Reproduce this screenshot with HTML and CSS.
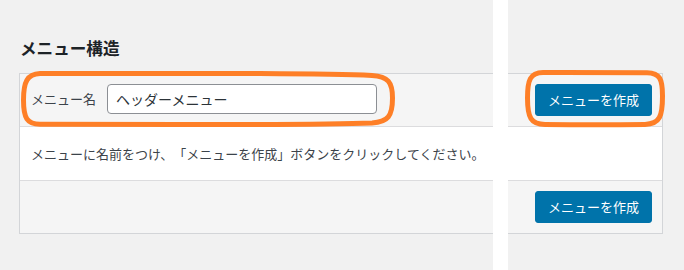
FILE: index.html
```html
<!DOCTYPE html>
<html lang="ja">
<head>
<meta charset="utf-8">
<title>メニュー構造</title>
<link rel="stylesheet" href="styles.css">
</head>
<body>
<div class="page">
  <h2 class="title">メニュー構造</h2>
  <div class="panel">
    <div class="panel-head">
      <label class="name-label" for="menu-name">メニュー名</label>
      <input class="name-input" id="menu-name" type="text" value="ヘッダーメニュー">
      <span class="spacer"></span>
      <button class="btn-primary" type="button">メニューを作成</button>
    </div>
    <div class="panel-body">
      <p class="hint">メニューに名前をつけ、「メニューを作成」ボタンをクリックしてください。</p>
    </div>
    <div class="panel-foot">
      <button class="btn-primary" type="button">メニューを作成</button>
    </div>
  </div>
  <div class="cut"></div>
  <svg class="marks" width="684" height="270" viewBox="0 0 684 270" aria-hidden="true">
    <path d="M40 73.5 C120 73 200 73.2 260 73.6 C320 74 350 74.5 372 75.5 C388 76.5 392.5 82 392.5 98 C392.5 116 388 122 372 123 C330 124.6 250 124.6 180 124.5 C120 124.4 70 124.5 40 124.2 C27 124 23.5 118 23.5 100 C23.5 82 27 74 40 73.5 Z"/>
    <path d="M543 72.5 C580 72.3 620 72.4 647 72.8 C660 73.2 662.5 79 662.5 96 C662.5 116 660 124 645 124.4 C610 124.8 575 124.7 545 124.5 C531 124.3 527.5 118 527.5 98 C527.5 80 530 72.8 543 72.5 Z"/>
  </svg>
</div>
</body>
</html>
```

FILE: styles.css
```css
html, body {
  margin: 0;
  padding: 0;
}
body {
  background: #f1f1f1;
  font-family: "Noto Sans CJK JP", "Noto Sans", sans-serif;
  color: #3c434a;
  text-spacing-trim: space-all;
}
.page {
  position: relative;
  width: 684px;
  height: 270px;
  padding: 36px 0 0 19px;
  box-sizing: border-box;
  overflow: hidden;
}
.title {
  margin: 0 0 13px 1px;
  font-size: 16.6px;
  line-height: 24px;
  font-weight: 700;
  color: #1d2327;
}
.panel {
  width: 644px;
  box-sizing: border-box;
  border: 1px solid #d3d5d8;
  background: #f5f5f5;
}
.panel-head {
  display: flex;
  align-items: flex-start;
  height: 53px;
  box-sizing: border-box;
  padding: 10px 10px 0 11px;
  border-bottom: 1px solid #dcdcde;
}
.name-label {
  font-size: 13px;
  line-height: 30px;
  margin-right: 11px;
  color: #3c434a;
}
.name-input {
  width: 270px;
  height: 30px;
  box-sizing: border-box;
  margin: 0;
  padding: 0 8px;
  border: 1px solid #8c8f94;
  border-radius: 4px;
  background: #fff;
  font-family: inherit;
  font-size: 14px;
  color: #2c3338;
}
.spacer {
  flex: 1;
}
.btn-primary {
  height: 32px;
  width: 117px;
  margin: 0;
  padding: 0;
  border: 1px solid #0073aa;
  border-radius: 3px;
  background: #0073aa;
  color: #fff;
  font-family: inherit;
  font-size: 13px;
  line-height: 30px;
}
.panel-body {
  height: 54px;
  box-sizing: border-box;
  display: flex;
  align-items: center;
  padding: 0 11px;
  background: #fff;
  border-bottom: 1px solid #dcdcde;
}
.hint {
  margin: 0;
  font-size: 13px;
  line-height: 20px;
  color: #3c434a;
}
.panel-foot {
  height: 52px;
  box-sizing: border-box;
  display: flex;
  justify-content: flex-end;
  padding: 10px 10px 0;
}
.cut {
  position: absolute;
  left: 493px;
  top: 0;
  width: 15px;
  height: 270px;
  background: #fff;
}
.marks {
  position: absolute;
  left: 0;
  top: 0;
}
.marks path {
  fill: none;
  stroke: #fe7f27;
  stroke-width: 5;
  stroke-linejoin: round;
}
```
